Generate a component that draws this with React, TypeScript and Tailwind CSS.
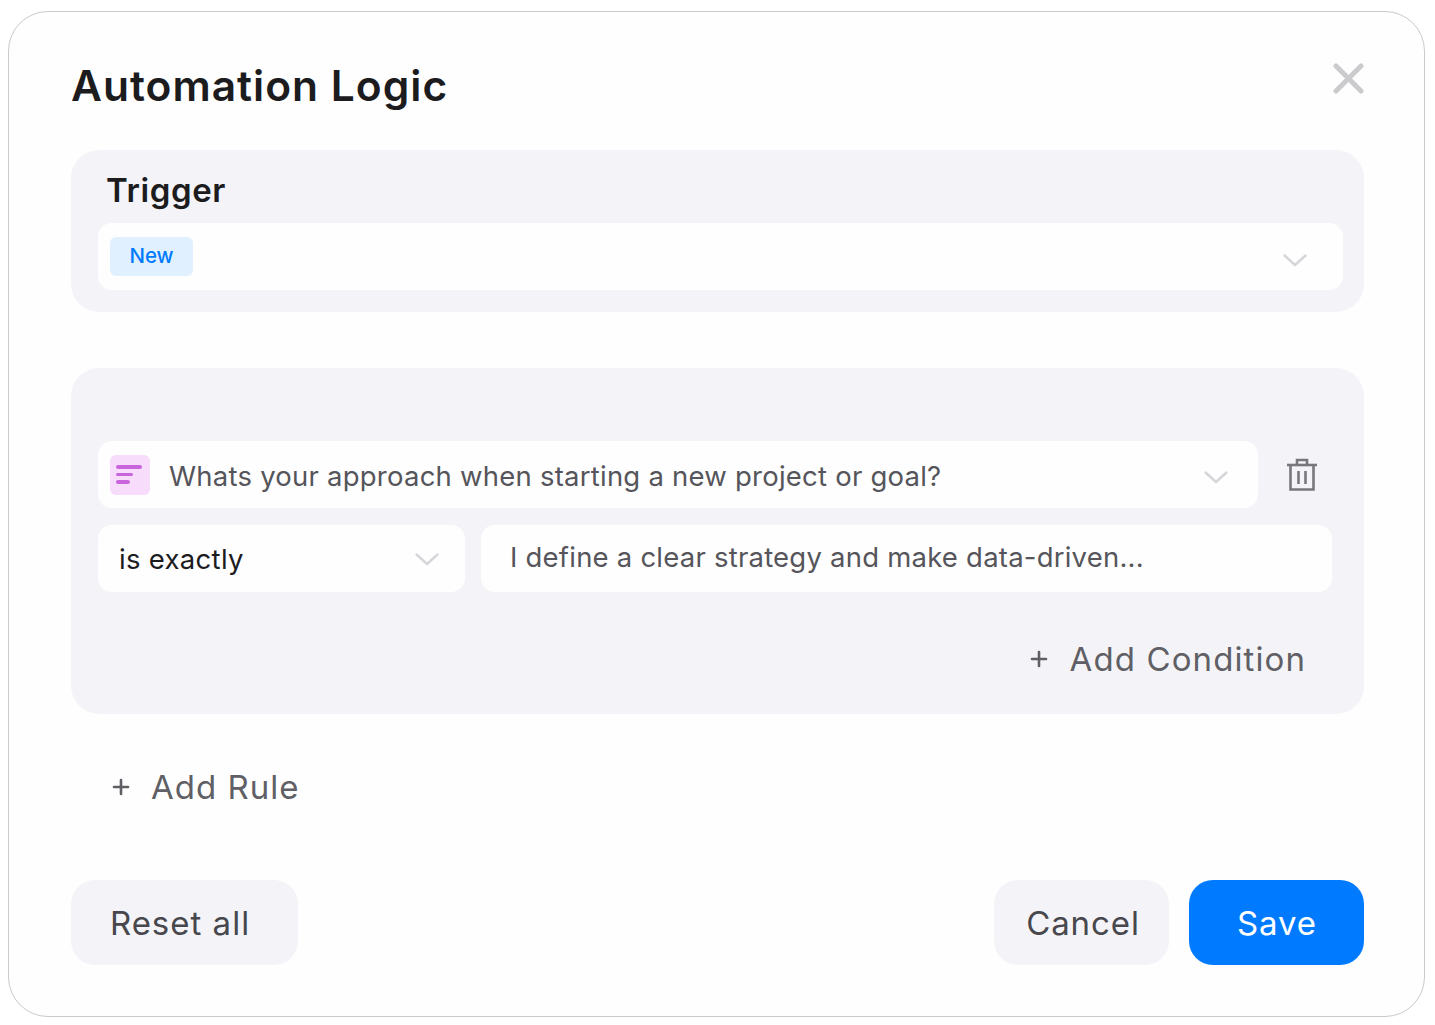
import React from 'react';
import { Plus } from 'lucide-react';

const font = { fontFamily: 'Inter, "Liberation Sans", sans-serif' };

const Chevron = ({ className }: { className: string }) => (
  <svg className={className} width="26" height="16" viewBox="0 0 26 16" fill="none">
    <path d="M2.5 3.5 13 13 23.5 3.5" stroke="#d6d6da" strokeWidth="2.4" strokeLinecap="round" strokeLinejoin="round" />
  </svg>
);

const TrashIcon = () => (
  <svg width="32" height="34" viewBox="0 0 32 34" fill="none" stroke="#77777d" strokeWidth="2.6">
    <path d="M1 7h30" />
    <path d="M11 6.5V2h10v4.5" />
    <path d="M4.5 7.5v24h23v-24" />
    <path d="M12.5 13v13M19.5 13v13" />
  </svg>
);

const TextIcon = () => (
  <div className="flex h-10 w-10 flex-col justify-center gap-[4px] rounded-md bg-[#f8dcfb] pl-[6px]">
    <div className="h-[3.5px] w-[26px] rounded-full bg-[#c965dc]" />
    <div className="h-[3.5px] w-[17px] rounded-full bg-[#c965dc]" />
    <div className="h-[3.5px] w-[14px] rounded-full bg-[#c965dc]" />
  </div>
);

export default function App() {
  return (
    <div className="h-[1025px] w-[1435px] overflow-hidden bg-white pl-[8px] pr-[10px] pt-[11px]" style={font}>
      <div className="flex h-[1006px] flex-col rounded-[40px] border border-[#c9c9ce] bg-[#fefefe] pl-[62px] pr-[60px]">
        <div className="flex h-[138px] items-start justify-between">
          <h1 className="mt-[45px] text-[42.5px] leading-[58px] font-semibold tracking-[1px] text-[#1c1c1f]">Automation Logic</h1>
          <svg className="mt-[50px]" width="32" height="32" viewBox="0 0 32 32" fill="none">
            <path d="M4 4 29 29M29 4 4 29" stroke="#cbcbce" strokeWidth="5" strokeLinecap="round" />
          </svg>
        </div>

        {/* Trigger */}
        <section className="h-[162px] rounded-[28px] bg-[#f4f4f8] pl-[27px] pr-[21px]">
          <h2 className="ml-[8px] mt-[18px] h-[55px] text-[33px] leading-[44px] font-semibold tracking-[0.6px] text-[#1c1c1f]">Trigger</h2>
          <div className="flex h-[67px] items-center justify-between rounded-[14px] bg-[#fefefe] pl-[12px] pr-[35px]">
            <span className="flex h-[39px] w-[83px] items-center justify-center rounded-md bg-[#e1f0ff] text-[20.5px] font-medium text-[#007aff]">New</span>
            <Chevron className="mt-[7px]" />
          </div>
        </section>

        {/* Rule */}
        <section className="mt-[56px] h-[346px] rounded-[28px] bg-[#f4f4f8] pl-[27px] pr-[32px] pt-[73px]">
          <div className="flex items-center">
            <div className="flex h-[67px] w-[1160px] items-center rounded-[14px] bg-[#fefefe] pl-[12px] pr-[29px]">
              <TextIcon />
              <span className="ml-[19px] mt-[4px] flex-1 text-[27.5px] tracking-[0.23px] text-[#55555b]">Whats your approach when starting a new project or goal?</span>
              <Chevron className="mt-[4px]" />
            </div>
            <div className="ml-[28px]"><TrashIcon /></div>
          </div>
          <div className="mt-[17px] flex gap-[16px]">
            <div className="flex h-[67px] w-[367px] items-center justify-between rounded-[14px] bg-[#fefefe] pl-[21px] pr-[25px]">
              <span className="mt-[2px] text-[27.5px] tracking-[0.3px] text-[#1c1c1f]">is exactly</span>
              <Chevron className="" />
            </div>
            <div className="flex h-[67px] flex-1 items-center rounded-[14px] bg-[#fefefe] pl-[29px]">
              <span className="mb-[2px] text-[27.5px] tracking-[0.22px] text-[#55555b]">I define a clear strategy and make data-driven...</span>
            </div>
          </div>
          <button className="ml-auto mr-[26px] mt-[42px] flex items-center text-[33px] leading-[50px] tracking-[1.1px] text-[#5f5f65]">
            <Plus size={24} strokeWidth={2.6} className="mr-[19px]" />
            Add Condition
          </button>
        </section>

        <button className="ml-[38px] mt-[48px] flex items-center self-start text-[33px] leading-[50px] tracking-[1px] text-[#5f5f65]">
          <Plus size={24} strokeWidth={2.6} className="mr-[18px]" />
          Add Rule
        </button>

        {/* Footer */}
        <div className="mt-[68px] flex justify-between">
          <button className="h-[85px] w-[227px] rounded-[24px] bg-[#f4f4f8] pr-[9px] pt-[2px] text-[33px] tracking-[1px] text-[#47474d]">Reset all</button>
          <div className="flex gap-[20px]">
            <button className="h-[85px] w-[175px] rounded-[24px] bg-[#f4f4f8] pl-[3px] pt-[2px] text-[33px] tracking-[0.9px] text-[#47474d]">Cancel</button>
            <button className="h-[85px] w-[175px] rounded-[24px] bg-[#007aff] pl-[1px] pt-[2px] text-[33px] tracking-[0.9px] text-white">Save</button>
          </div>
        </div>
      </div>
    </div>
  );
}
